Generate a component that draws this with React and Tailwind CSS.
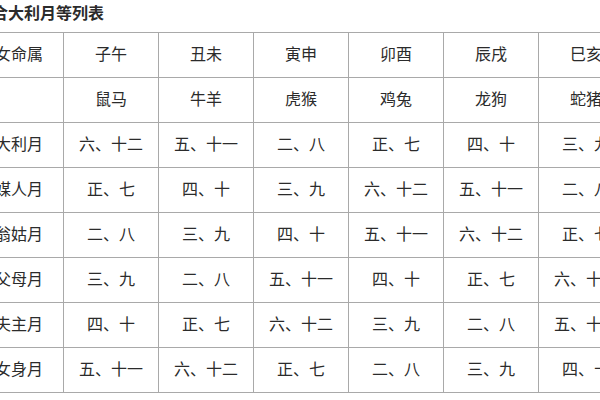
import React from 'react';

const zodiac = [
  ['子午', '鼠马'],
  ['丑未', '牛羊'],
  ['寅申', '虎猴'],
  ['卯酉', '鸡兔'],
  ['辰戌', '龙狗'],
  ['巳亥', '蛇猪'],
];

// 每行：月份名称 + 六个属相组对应的月份
const rows = [
  ['大利月', ['六、十二', '五、十一', '二、八', '正、七', '四、十', '三、九']],
  ['妨媒人月', ['正、七', '四、十', '三、九', '六、十二', '五、十一', '二、八']],
  ['妨翁姑月', ['二、八', '三、九', '四、十', '五、十一', '六、十二', '正、七']],
  ['妨父母月', ['三、九', '二、八', '五、十一', '四、十', '正、七', '六、十二']],
  ['妨夫主月', ['四、十', '正、七', '六、十二', '三、九', '二、八', '五、十一']],
  ['妨女身月', ['五、十一', '六、十二', '正、七', '二、八', '三、九', '四、十']],
];

const cell = 'border border-[#a9a9a9] h-[45px] text-center align-middle pb-[5px] whitespace-nowrap';
const labelCell = 'border border-[#a9a9a9] h-[45px] text-right align-middle pr-[20px] pb-[5px] whitespace-nowrap';

const App = () => {
  return (
    <div
      className="w-[600px] h-[400px] overflow-hidden bg-white text-[#2b2b2b]"
      style={{ fontFamily: '"Noto Sans CJK SC", "Noto Sans", sans-serif' }}
    >
      <div className="h-[32px] -ml-2 pt-[1px] text-[16px] font-bold leading-[22px] whitespace-nowrap">
        合大利月等列表
      </div>
      <table className="-ml-[32px] w-[665px] min-w-[665px] table-fixed border-collapse text-[16px] leading-[20px]">
        <colgroup>
          {Array.from({ length: 7 }).map((_, i) => (
            <col key={i} className="w-[95px]" />
          ))}
        </colgroup>
        <tbody>
          <tr>
            <td className={labelCell}>女命属</td>
            {zodiac.map(([a]) => (
              <td key={a} className={cell}>{a}</td>
            ))}
          </tr>
          <tr>
            <td className={labelCell}></td>
            {zodiac.map(([a, b]) => (
              <td key={a} className={cell}>{b}</td>
            ))}
          </tr>
          {rows.map(([name, vals]) => (
            <tr key={name}>
              <td className={labelCell}>{name}</td>
              {vals.map((v, i) => (
                <td key={i} className={cell}>{v}</td>
              ))}
            </tr>
          ))}
        </tbody>
      </table>
    </div>
  );
};

export default App;
